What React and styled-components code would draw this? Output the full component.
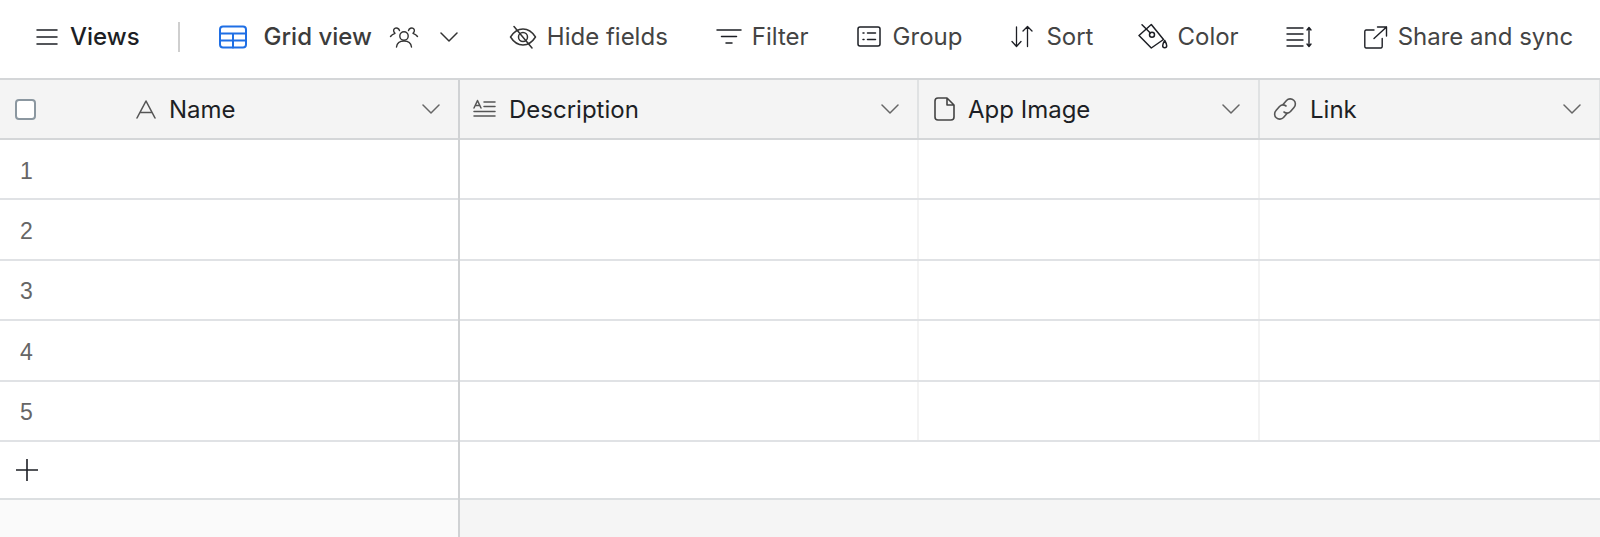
import styled, { createGlobalStyle } from 'styled-components'

const GlobalStyle = createGlobalStyle`
html, body {
    margin: 0;
    padding: 0;
    background: #fff;
    overflow: hidden;
}
#root {
    height: 537px;
}
`

const Page = styled.div`
display: flex;
flex-direction: column;
width: 1600px;
height: 537px;
font-family: Inter, "Liberation Sans", sans-serif;
color: #1d1f25;
`

const Toolbar = styled.div`
display: flex;
align-items: center;
flex: none;
box-sizing: border-box;
height: 80px;
padding-left: 36px;
padding-bottom: 5px;
border-bottom: 2px solid #d4d6d8;
`

const ToolItem = styled.div`
display: flex;
align-items: center;
flex: none;
gap: ${p => p.$gap ?? 10}px;
margin-left: ${p => p.$left ?? 0}px;
font-size: 24px;
font-weight: ${p => (p.$strong ? 500 : 400)};
color: ${p => (p.$strong ? '#1d1f25' : '#444')};
white-space: nowrap;
`

const ViewName = styled.span`
font-weight: 500;
color: #3c3c3c;
`

const Divider = styled.div`
width: 2px;
height: 30px;
margin-left: 38px;
background: #cfcfcf;
`

const Table = styled.div`
display: flex;
flex: 1;
min-height: 0;
`

const Pane = styled.div`
display: flex;
flex-direction: column;
flex: none;
box-sizing: border-box;
width: ${p => p.$width}px;
border-right: ${p => (p.$frozen ? '2px solid #d0d2d4' : 'none')};
`

const HeaderRow = styled.div`
display: flex;
flex: none;
height: 60px;
box-sizing: border-box;
background: #f4f4f4;
border-bottom: 2px solid #d4d6d8;
`

const HeaderCell = styled.div`
display: flex;
align-items: center;
flex: none;
box-sizing: border-box;
width: ${p => p.$width}px;
padding-left: ${p => p.$pad ?? 14}px;
padding-right: ${p => (p.$frozen ? 16 : 18)}px;
gap: ${p => p.$gap ?? 13}px;
font-size: 24px;
color: #1d1f25;
white-space: nowrap;
border-right: 2px solid ${p => (p.$frozen ? 'transparent' : '#e0e2e3')};
`

const HeaderChevron = styled.span`
display: flex;
margin-left: auto;
`

const CheckBox = styled.span`
flex: none;
box-sizing: border-box;
width: 21px;
height: 21px;
margin-right: 87px;
border: 2px solid #8b97a0;
border-radius: 4px;
background: #fff;
`

const Row = styled.div`
display: flex;
flex: none;
height: 60.4px;
box-sizing: border-box;
background: #fff;
border-bottom: 2px solid #e0e2e5;
`

const RowNumber = styled.div`
display: flex;
align-items: center;
padding-left: 20px;
padding-top: 4px;
font-family: "Liberation Sans", Arial, sans-serif;
font-size: 23px;
color: #666;
`

const Cell = styled.div`
flex: none;
box-sizing: border-box;
width: ${p => p.$width}px;
border-right: 2px solid #f3f3f3;
`

const AddRow = styled.div`
display: flex;
align-items: center;
flex: none;
height: 58px;
box-sizing: border-box;
padding-left: 16px;
background: #fff;
border-bottom: 2px solid #dcdfe1;
`

const Footer = styled.div`
flex: 1;
background: ${p => (p.$frozen ? '#fafafa' : '#f5f5f5')};
`

function Icon({ size = 24, width, height, color = '#333', sw = 1.5, children }) {
    return (
        <svg
            width={width ?? size}
            height={height ?? size}
            viewBox={`0 0 ${width ?? size} ${height ?? size}`}
            fill="none"
            stroke={color}
            strokeWidth={sw}
            strokeLinecap="round"
            strokeLinejoin="round"
            style={{ display: 'block', flex: 'none' }}
        >
            {children}
        </svg>
    )
}

const Chevron = ({ color = '#555', width = 18 }) => (
    <Icon width={width} height={10} color={color}>
        <path d={`M1 1 L${width / 2} 9 L${width - 1} 1`} />
    </Icon>
)

const MenuIcon = () => (
    <Icon width={22} height={18} color="#1d1f25">
        <path d="M1 2H21M1 9H21M1 16H21" />
    </Icon>
)

const GridIcon = () => (
    <Icon width={28} height={24} color="#1f6fe5" sw={2}>
        <rect x="1" y="1.500" width="26" height="21" rx="3" />
        <path d="M1 8.500H27M1 15.500H27M14 8.500V22.500" />
    </Icon>
)

const PeopleIcon = () => (
    <Icon width={30} height={24} color="#333" sw={1.4}>
        <circle cx="15" cy="11" r="4.200" />
        <path d="M7.500 22C8 18 11 16 15 16C19 16 22 18 22.500 22" />
        <path d="M10.500 5.500A3.400 3.400 0 0 0 5.500 3.500C4 5 4.500 7 6 8.300C4 9 2.500 10 1.500 11.500" />
        <path d="M19.500 5.500A3.400 3.400 0 0 1 24.500 3.500C26 5 25.500 7 24 8.300C26 9 27.500 10 28.500 11.500" />
    </Icon>
)

const EyeOffIcon = () => (
    <Icon width={28} height={24} color="#333" sw={1.5}>
        <path d="M1.500 12C5 6.500 9 4 14 4C19 4 23 6.500 26.500 12C23 17.500 19 20 14 20C9 20 5 17.500 1.500 12Z" />
        <circle cx="14" cy="12" r="4.500" />
        <path d="M5 1.500L23 23" />
    </Icon>
)

const FilterIcon = () => (
    <Icon width={26} height={18} color="#1d1f25">
        <path d="M1 2H25M5.500 8.500H20.500M10 15H16" />
    </Icon>
)

const GroupIcon = () => (
    <Icon width={24} height={21} color="#1d1f25">
        <rect x="1" y="1" width="22" height="19" rx="2" />
        <path d="M6 7H7M6 13.500H7M10.500 7H18.500M10.500 13.500H18.500" />
    </Icon>
)

const SortIcon = () => (
    <Icon width={24} height={23} color="#1d1f25" sw={1.3}>
        <path d="M6.500 2V21M2 16.500L6.500 21.500L11 16.500M17.500 21.500V1.500M13 6L17.500 1.500L22 6" />
    </Icon>
)

const BucketIcon = () => (
    <Icon width={30} height={30} color="#1d1f25" sw={1.5}>
        <path d="M13.300 2.500L25.500 17.500L13.300 26L1 13.500Z" />
        <circle cx="14" cy="12.800" r="2.500" />
        <path d="M4 2.800L12.300 11" />
        <path d="M26.700 18.500C28.200 21 28.700 22 28.700 23.700A2 2 0 0 1 24.700 23.700C24.700 22 25.200 21 26.700 18.500Z" />
    </Icon>
)

const RowHeightIcon = () => (
    <Icon width={26} height={22} color="#1d1f25" sw={1.4}>
        <path d="M1 2H17M1 8H17M1 14H17M1 20H17M23 2V20M21 4L23 1.500L25 4M21 18L23 20.500L25 18" />
    </Icon>
)

const ShareIcon = () => (
    <Icon width={24} height={24} color="#1d1f25" sw={1.4}>
        <path d="M10 5H2A1.500 1.500 0 0 0 0.800 6.500V21.500A1.500 1.500 0 0 0 2 23H17A1.500 1.500 0 0 0 18.200 21.500V13.500" />
        <path d="M10 13.500L22.500 2M13.500 2H22.500V11" />
    </Icon>
)

const TextIcon = () => (
    <Icon width={20} height={20} color="#555" sw={1.6}>
        <path d="M1 19L10 2L19 19M5 13.500H15" />
    </Icon>
)

const LongTextIcon = () => (
    <Icon width={23} height={20} color="#555" sw={1.5}>
        <path d="M1 9L4.500 1.500L8 9M2.200 6.500H6.800M11 3H22M11 7.500H22M1 12.500H22M1 17H22" />
    </Icon>
)

const FileIcon = () => (
    <Icon width={21} height={24} color="#444" sw={1.6}>
        <path d="M13 1H4A3 3 0 0 0 1 4V20A3 3 0 0 0 4 23H17A3 3 0 0 0 20 20V8L13 1V8H20" />
    </Icon>
)

const LinkIcon = () => (
    <Icon width={24} height={24} color="#555" sw={1.6}>
        <path d="M10 7.500L13.500 3.500A5 5 0 0 1 21 10.500L17.500 14.500A5 5 0 0 1 11 15" />
        <path d="M14 16.500L10.500 20.500A5 5 0 0 1 3 13.500L6.500 9.500A5 5 0 0 1 13 9" />
    </Icon>
)

const PlusIcon = () => (
    <Icon width={22} height={22} color="#1d1f25" sw={1.6}>
        <path d="M11 0V22M0 11H22" />
    </Icon>
)

const columns = [
    { name: 'Description', icon: <LongTextIcon />, width: 459, pad: 13 },
    { name: 'App Image', icon: <FileIcon />, width: 341, pad: 15 },
    { name: 'Link', icon: <LinkIcon />, width: 341, pad: 13 },
]

const rows = [1, 2, 3, 4, 5]

function App() {
    return (
        <Page>
            <GlobalStyle />
            <Toolbar>
                <ToolItem $strong $gap={12}><MenuIcon />Views</ToolItem>
                <Divider />
                <ToolItem $left={39} $gap={17}><GridIcon /><ViewName>Grid view</ViewName></ToolItem>
                <ToolItem $left={17}><PeopleIcon /></ToolItem>
                <ToolItem $left={21}><Chevron color="#333" /></ToolItem>
                <ToolItem $left={51} $gap={10}><EyeOffIcon />Hide fields</ToolItem>
                <ToolItem $left={48}><FilterIcon />Filter</ToolItem>
                <ToolItem $left={48} $gap={12}><GroupIcon />Group</ToolItem>
                <ToolItem $left={48} $gap={12}><SortIcon />Sort</ToolItem>
                <ToolItem $left={45} $gap={9}><BucketIcon />Color</ToolItem>
                <ToolItem $left={47}><RowHeightIcon /></ToolItem>
                <ToolItem $left={52} $gap={10}><ShareIcon />Share and sync</ToolItem>
            </Toolbar>
            <Table>
                <Pane $width={460} $frozen>
                    <HeaderRow>
                        <HeaderCell $width={458} $pad={15} $frozen>
                            <CheckBox />
                            <TextIcon />
                            Name
                            <HeaderChevron><Chevron color="#666" /></HeaderChevron>
                        </HeaderCell>
                    </HeaderRow>
                    {rows.map(n => (
                        <Row key={n}><RowNumber>{n}</RowNumber></Row>
                    ))}
                    <AddRow><PlusIcon /></AddRow>
                    <Footer $frozen />
                </Pane>
                <Pane $width={1140}>
                    <HeaderRow>
                        {columns.map(c => (
                            <HeaderCell key={c.name} $width={c.width} $pad={c.pad}>
                                {c.icon}
                                {c.name}
                                <HeaderChevron><Chevron color="#666" /></HeaderChevron>
                            </HeaderCell>
                        ))}
                    </HeaderRow>
                    {rows.map(n => (
                        <Row key={n}>
                            {columns.map(c => <Cell key={c.name} $width={c.width} />)}
                        </Row>
                    ))}
                    <AddRow />
                    <Footer />
                </Pane>
            </Table>
        </Page>
    )
}

export default App
